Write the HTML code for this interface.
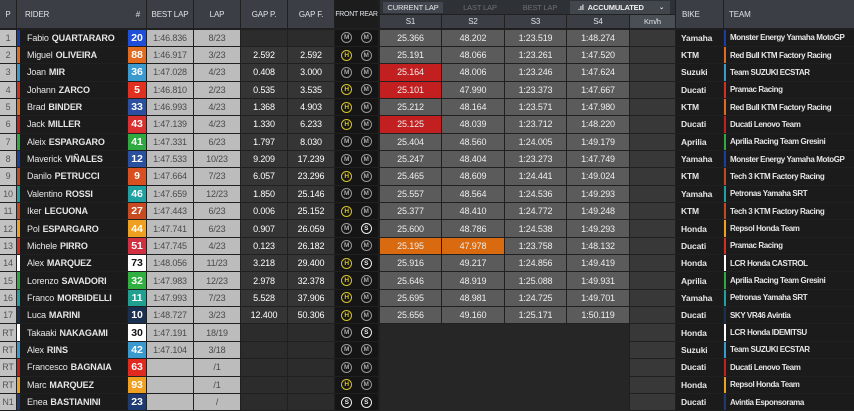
<!DOCTYPE html>
<html><head><meta charset="utf-8"><style>
*{box-sizing:border-box;margin:0;padding:0}
body{width:854px;height:411px;overflow:hidden;background:#202020;font-family:"Liberation Sans",sans-serif;font-size:9px;color:#fff;position:relative;letter-spacing:-0.15px}
.h{position:absolute;top:0;height:28px;background:#3b3f45;color:#dfe2e6;font-size:8px;display:flex;align-items:center;justify-content:center;white-space:nowrap}
.r{position:absolute;left:0;width:854px;height:16.4px}
.r div{position:absolute;top:0;height:16.4px;display:flex;align-items:center;justify-content:center;white-space:nowrap;overflow:hidden}
.p{left:0;width:16px;background:#c2c2c2;color:#555}
.n{left:17px;width:110px;background:#1b1b1b;justify-content:flex-start!important;padding-left:7px;border-left:3px solid #888;color:#e6e6e6}
.n b{margin-left:3px}
.k{left:128px;width:18px;font-weight:bold;font-size:10.5px;color:#fff}
.b{left:147px;width:46px;background:#bcbcbc;color:#4a4a4a}
.l{left:194px;width:46px;background:#bcbcbc;color:#4a4a4a}
.g{left:241px;width:46px;background:#353535}
.f{left:288px;width:46px;background:#353535}
.t{left:335px;width:43px;background:#151515;justify-content:space-around!important;padding:0 2px}
.t span{flex:none;width:11px;height:11px;border:1px solid #999;border-radius:50%;font-size:6.5px;font-weight:bold;color:#aaa;display:flex;align-items:center;justify-content:center;letter-spacing:0}
.t span.H{border-color:#d8c428;color:#d8c428}
.t span.S{border-color:#eee;color:#eee}
.s1,.s2,.s3,.s4{background:#5b5b5b;color:#eee}
.s1{left:380px;width:61px}.s2{left:442px;width:62px}.s3{left:505px;width:61px}.s4{left:567px;width:62px}
.rd{background:#c22020!important}.or{background:#d96a10!important}
.v{left:630px;width:45px;background:#383838}
.bk{left:676px;width:47px;background:#1b1b1b;justify-content:flex-start!important;padding-left:5px;font-weight:bold;color:#e6e6e6;font-size:8.5px}
.tm{left:724px;width:130px;background:#1b1b1b;justify-content:flex-start!important;padding-left:4px;border-left:2px solid #888;font-weight:bold;color:#e6e6e6;font-size:8px;letter-spacing:-0.4px}
.e{background:#2c2c2c!important}
</style></head><body>
<div class="h" style="left:0;width:16px">P</div>
<div class="h" style="left:17px;width:129px;justify-content:space-between;padding:0 6px 0 8px"><span>RIDER</span><span>#</span></div>
<div class="h" style="left:147px;width:46px">BEST LAP</div>
<div class="h" style="left:194px;width:46px">LAP</div>
<div class="h" style="left:241px;width:46px">GAP P.</div>
<div class="h" style="left:288px;width:46px">GAP F.</div>
<div class="h" style="left:335px;width:43px;background:#1c1c1c;font-size:7px;letter-spacing:-0.3px">FRONT REAR</div>
<div style="position:absolute;left:380px;top:0;width:295px;height:14px;background:#2e3136"></div>
<div style="position:absolute;left:383px;top:2px;width:60px;height:11px;background:#434850;color:#e8e8e8;font-size:7.5px;display:flex;align-items:center;justify-content:center">CURRENT LAP</div>
<div style="position:absolute;left:450px;top:2px;width:60px;height:11px;color:#6c7076;font-size:7.5px;display:flex;align-items:center;justify-content:center">LAST LAP</div>
<div style="position:absolute;left:510px;top:2px;width:60px;height:11px;color:#6c7076;font-size:7.5px;display:flex;align-items:center;justify-content:center">BEST LAP</div>
<div style="position:absolute;left:570px;top:1px;width:100px;height:13px;background:#42464d;color:#eee;font-size:7.5px;font-weight:bold;display:flex;align-items:center;padding-left:8px">.ıl&nbsp;&nbsp;ACCUMULATED<span style="margin-left:auto;margin-right:6px;font-size:6px">⌄</span></div>
<div class="h" style="top:15px;height:13px;left:380px;width:61px">S1</div>
<div class="h" style="top:15px;height:13px;left:442px;width:62px">S2</div>
<div class="h" style="top:15px;height:13px;left:505px;width:61px">S3</div>
<div class="h" style="top:15px;height:13px;left:567px;width:62px">S4</div>
<div class="h" style="top:15px;height:13px;left:630px;width:45px;background:#4a4f56;font-size:7.5px">Km/h</div>
<div class="h" style="left:676px;width:47px;justify-content:flex-start;padding-left:6px">BIKE</div>
<div class="h" style="left:724px;width:130px;justify-content:flex-start;padding-left:5px">TEAM</div>

<div class="r" style="top:29.5px"><div class="p">1</div><div class="n" style="border-color:#1a3fa0">Fabio<b>QUARTARARO</b></div><div class="k" style="background:#1f4fd8">20</div><div class="b">1:46.836</div><div class="l">8/23</div><div class="g e"></div><div class="f e"></div><div class="t"><span>M</span><span>M</span></div><div class="s1">25.366</div><div class="s2">48.202</div><div class="s3">1:23.519</div><div class="s4">1:48.274</div><div class="v"></div><div class="bk">Yamaha</div><div class="tm" style="border-color:#1a3fa0">Monster Energy Yamaha MotoGP</div></div>
<div class="r" style="top:46.85px"><div class="p">2</div><div class="n" style="border-color:#e06a20">Miguel<b>OLIVEIRA</b></div><div class="k" style="background:#e06a20">88</div><div class="b">1:46.917</div><div class="l">3/23</div><div class="g">2.592</div><div class="f">2.592</div><div class="t"><span class="H">H</span><span>M</span></div><div class="s1">25.191</div><div class="s2">48.066</div><div class="s3">1:23.261</div><div class="s4">1:47.520</div><div class="v"></div><div class="bk">KTM</div><div class="tm" style="border-color:#e06a20">Red Bull KTM Factory Racing</div></div>
<div class="r" style="top:64.2px"><div class="p">3</div><div class="n" style="border-color:#3a9ad0">Joan<b>MIR</b></div><div class="k" style="background:#3a9ad0">36</div><div class="b">1:47.028</div><div class="l">4/23</div><div class="g">0.408</div><div class="f">3.000</div><div class="t"><span>M</span><span>M</span></div><div class="s1 rd">25.164</div><div class="s2">48.006</div><div class="s3">1:23.246</div><div class="s4">1:47.624</div><div class="v"></div><div class="bk">Suzuki</div><div class="tm" style="border-color:#3a9ad0">Team SUZUKI ECSTAR</div></div>
<div class="r" style="top:81.55px"><div class="p">4</div><div class="n" style="border-color:#d03020">Johann<b>ZARCO</b></div><div class="k" style="background:#e03020">5</div><div class="b">1:46.810</div><div class="l">2/23</div><div class="g">0.535</div><div class="f">3.535</div><div class="t"><span class="H">H</span><span>M</span></div><div class="s1 rd">25.101</div><div class="s2">47.990</div><div class="s3">1:23.373</div><div class="s4">1:47.667</div><div class="v"></div><div class="bk">Ducati</div><div class="tm" style="border-color:#d03020">Pramac Racing</div></div>
<div class="r" style="top:98.9px"><div class="p">5</div><div class="n" style="border-color:#e06a20">Brad<b>BINDER</b></div><div class="k" style="background:#2c4fa0">33</div><div class="b">1:46.993</div><div class="l">4/23</div><div class="g">1.368</div><div class="f">4.903</div><div class="t"><span class="H">H</span><span>M</span></div><div class="s1">25.212</div><div class="s2">48.164</div><div class="s3">1:23.571</div><div class="s4">1:47.980</div><div class="v"></div><div class="bk">KTM</div><div class="tm" style="border-color:#e06a20">Red Bull KTM Factory Racing</div></div>
<div class="r" style="top:116.25px"><div class="p">6</div><div class="n" style="border-color:#c02020">Jack<b>MILLER</b></div><div class="k" style="background:#d83030">43</div><div class="b">1:47.139</div><div class="l">4/23</div><div class="g">1.330</div><div class="f">6.233</div><div class="t"><span class="H">H</span><span>M</span></div><div class="s1 rd">25.125</div><div class="s2">48.039</div><div class="s3">1:23.712</div><div class="s4">1:48.220</div><div class="v"></div><div class="bk">Ducati</div><div class="tm" style="border-color:#c02020">Ducati Lenovo Team</div></div>
<div class="r" style="top:133.6px"><div class="p">7</div><div class="n" style="border-color:#2faa40">Aleix<b>ESPARGARO</b></div><div class="k" style="background:#2faa40">41</div><div class="b">1:47.331</div><div class="l">6/23</div><div class="g">1.797</div><div class="f">8.030</div><div class="t"><span>M</span><span>M</span></div><div class="s1">25.404</div><div class="s2">48.560</div><div class="s3">1:24.005</div><div class="s4">1:49.179</div><div class="v"></div><div class="bk">Aprilia</div><div class="tm" style="border-color:#2faa40">Aprilia Racing Team Gresini</div></div>
<div class="r" style="top:150.95px"><div class="p">8</div><div class="n" style="border-color:#1a3fa0">Maverick<b>VIÑALES</b></div><div class="k" style="background:#2a50a0">12</div><div class="b">1:47.533</div><div class="l">10/23</div><div class="g">9.209</div><div class="f">17.239</div><div class="t"><span>M</span><span>M</span></div><div class="s1">25.247</div><div class="s2">48.404</div><div class="s3">1:23.273</div><div class="s4">1:47.749</div><div class="v"></div><div class="bk">Yamaha</div><div class="tm" style="border-color:#1a3fa0">Monster Energy Yamaha MotoGP</div></div>
<div class="r" style="top:168.3px"><div class="p">9</div><div class="n" style="border-color:#c04a20">Danilo<b>PETRUCCI</b></div><div class="k" style="background:#d85020">9</div><div class="b">1:47.664</div><div class="l">7/23</div><div class="g">6.057</div><div class="f">23.296</div><div class="t"><span class="H">H</span><span>M</span></div><div class="s1">25.465</div><div class="s2">48.609</div><div class="s3">1:24.441</div><div class="s4">1:49.024</div><div class="v"></div><div class="bk">KTM</div><div class="tm" style="border-color:#c04a20">Tech 3 KTM Factory Racing</div></div>
<div class="r" style="top:185.65px"><div class="p">10</div><div class="n" style="border-color:#20a0a0">Valentino<b>ROSSI</b></div><div class="k" style="background:#20a0a0">46</div><div class="b">1:47.659</div><div class="l">12/23</div><div class="g">1.850</div><div class="f">25.146</div><div class="t"><span>M</span><span>M</span></div><div class="s1">25.557</div><div class="s2">48.564</div><div class="s3">1:24.536</div><div class="s4">1:49.293</div><div class="v"></div><div class="bk">Yamaha</div><div class="tm" style="border-color:#20a0a0">Petronas Yamaha SRT</div></div>
<div class="r" style="top:203px"><div class="p">11</div><div class="n" style="border-color:#c04a20">Iker<b>LECUONA</b></div><div class="k" style="background:#c84a20">27</div><div class="b">1:47.443</div><div class="l">6/23</div><div class="g">0.006</div><div class="f">25.152</div><div class="t"><span class="H">H</span><span>M</span></div><div class="s1">25.377</div><div class="s2">48.410</div><div class="s3">1:24.772</div><div class="s4">1:49.248</div><div class="v"></div><div class="bk">KTM</div><div class="tm" style="border-color:#c04a20">Tech 3 KTM Factory Racing</div></div>
<div class="r" style="top:220.35px"><div class="p">12</div><div class="n" style="border-color:#f0a020">Pol<b>ESPARGARO</b></div><div class="k" style="background:#f0a020">44</div><div class="b">1:47.741</div><div class="l">6/23</div><div class="g">0.907</div><div class="f">26.059</div><div class="t"><span>M</span><span class="S">S</span></div><div class="s1">25.600</div><div class="s2">48.786</div><div class="s3">1:24.538</div><div class="s4">1:49.293</div><div class="v"></div><div class="bk">Honda</div><div class="tm" style="border-color:#f0a020">Repsol Honda Team</div></div>
<div class="r" style="top:237.7px"><div class="p">13</div><div class="n" style="border-color:#d03020">Michele<b>PIRRO</b></div><div class="k" style="background:#d03040">51</div><div class="b">1:47.745</div><div class="l">4/23</div><div class="g">0.123</div><div class="f">26.182</div><div class="t"><span>M</span><span>M</span></div><div class="s1 or">25.195</div><div class="s2 or">47.978</div><div class="s3">1:23.758</div><div class="s4">1:48.132</div><div class="v"></div><div class="bk">Ducati</div><div class="tm" style="border-color:#d03020">Pramac Racing</div></div>
<div class="r" style="top:255.05px"><div class="p">14</div><div class="n" style="border-color:#fff">Alex<b>MARQUEZ</b></div><div class="k" style="background:#fff;color:#111">73</div><div class="b">1:48.056</div><div class="l">11/23</div><div class="g">3.218</div><div class="f">29.400</div><div class="t"><span class="H">H</span><span class="S">S</span></div><div class="s1">25.916</div><div class="s2">49.217</div><div class="s3">1:24.856</div><div class="s4">1:49.419</div><div class="v"></div><div class="bk">Honda</div><div class="tm" style="border-color:#fff">LCR Honda CASTROL</div></div>
<div class="r" style="top:272.4px"><div class="p">15</div><div class="n" style="border-color:#2faa40">Lorenzo<b>SAVADORI</b></div><div class="k" style="background:#30b040">32</div><div class="b">1:47.983</div><div class="l">12/23</div><div class="g">2.978</div><div class="f">32.378</div><div class="t"><span class="H">H</span><span>M</span></div><div class="s1">25.646</div><div class="s2">48.919</div><div class="s3">1:25.088</div><div class="s4">1:49.931</div><div class="v"></div><div class="bk">Aprilia</div><div class="tm" style="border-color:#2faa40">Aprilia Racing Team Gresini</div></div>
<div class="r" style="top:289.75px"><div class="p">16</div><div class="n" style="border-color:#20a0a0">Franco<b>MORBIDELLI</b></div><div class="k" style="background:#20a090">11</div><div class="b">1:47.993</div><div class="l">7/23</div><div class="g">5.528</div><div class="f">37.906</div><div class="t"><span class="H">H</span><span>M</span></div><div class="s1">25.695</div><div class="s2">48.981</div><div class="s3">1:24.725</div><div class="s4">1:49.701</div><div class="v"></div><div class="bk">Yamaha</div><div class="tm" style="border-color:#20a0a0">Petronas Yamaha SRT</div></div>
<div class="r" style="top:307.1px"><div class="p">17</div><div class="n" style="border-color:#1a3050">Luca<b>MARINI</b></div><div class="k" style="background:#1a3050">10</div><div class="b">1:48.727</div><div class="l">3/23</div><div class="g">12.400</div><div class="f">50.306</div><div class="t"><span class="H">H</span><span>M</span></div><div class="s1">25.656</div><div class="s2">49.160</div><div class="s3">1:25.171</div><div class="s4">1:50.119</div><div class="v"></div><div class="bk">Ducati</div><div class="tm" style="border-color:#1a3050">SKY VR46 Avintia</div></div>
<div style="position:absolute;left:380px;top:324.45px;width:249px;height:87px;background:#262626"></div>
<div class="r" style="top:324.45px"><div class="p">RT</div><div class="n" style="border-color:#fff">Takaaki<b>NAKAGAMI</b></div><div class="k" style="background:#fff;color:#111">30</div><div class="b">1:47.191</div><div class="l">18/19</div><div class="g e"></div><div class="f e"></div><div class="t"><span>M</span><span class="S">S</span></div><div class="v"></div><div class="bk">Honda</div><div class="tm" style="border-color:#fff">LCR Honda IDEMITSU</div></div>
<div class="r" style="top:341.8px"><div class="p">RT</div><div class="n" style="border-color:#3a9ad0">Alex<b>RINS</b></div><div class="k" style="background:#3a9ad0">42</div><div class="b">1:47.104</div><div class="l">3/18</div><div class="g e"></div><div class="f e"></div><div class="t"><span>M</span><span>M</span></div><div class="v"></div><div class="bk">Suzuki</div><div class="tm" style="border-color:#3a9ad0">Team SUZUKI ECSTAR</div></div>
<div class="r" style="top:359.15px"><div class="p">RT</div><div class="n" style="border-color:#c02020">Francesco<b>BAGNAIA</b></div><div class="k" style="background:#e02a20">63</div><div class="b"></div><div class="l">/1</div><div class="g e"></div><div class="f e"></div><div class="t"><span>M</span><span>M</span></div><div class="v"></div><div class="bk">Ducati</div><div class="tm" style="border-color:#c02020">Ducati Lenovo Team</div></div>
<div class="r" style="top:376.5px"><div class="p">RT</div><div class="n" style="border-color:#f0a020">Marc<b>MARQUEZ</b></div><div class="k" style="background:#f0a020">93</div><div class="b"></div><div class="l">/1</div><div class="g e"></div><div class="f e"></div><div class="t"><span class="H">H</span><span>M</span></div><div class="v"></div><div class="bk">Honda</div><div class="tm" style="border-color:#f0a020">Repsol Honda Team</div></div>
<div class="r" style="top:393.85px"><div class="p">N1</div><div class="n" style="border-color:#1e3a70">Enea<b>BASTIANINI</b></div><div class="k" style="background:#1e3a70">23</div><div class="b"></div><div class="l">/</div><div class="g e"></div><div class="f e"></div><div class="t"><span class="S">S</span><span class="S">S</span></div><div class="v"></div><div class="bk">Ducati</div><div class="tm" style="border-color:#1e3a70">Avintia Esponsorama</div></div>
</body></html>
